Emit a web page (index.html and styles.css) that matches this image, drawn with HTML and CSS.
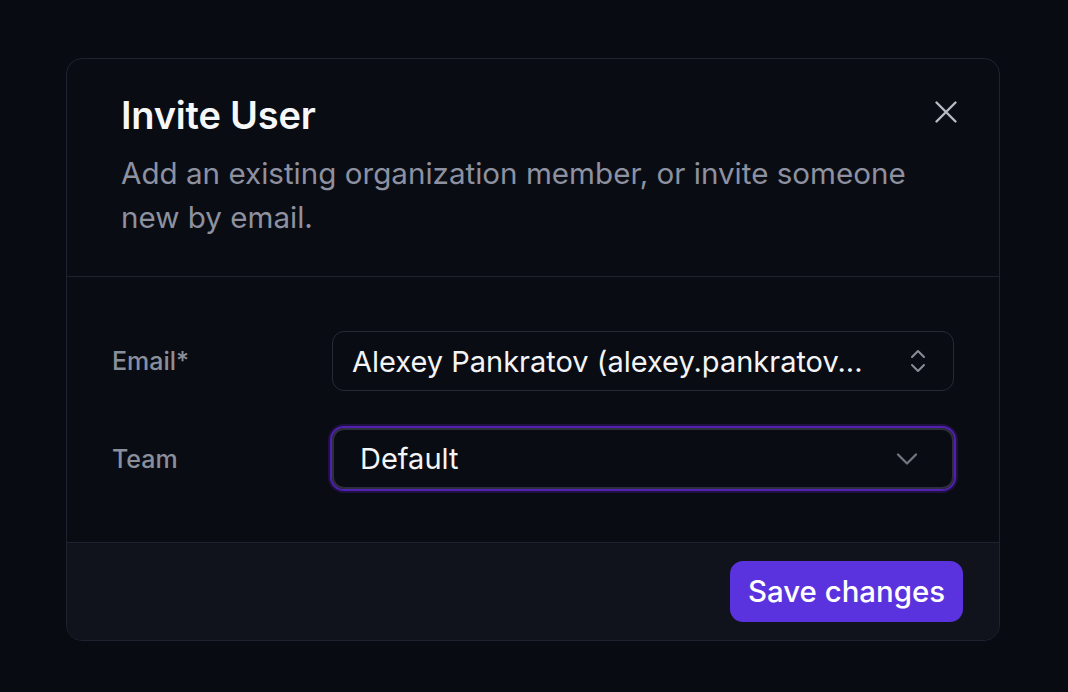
FILE: index.html
```html
<!DOCTYPE html>
<html lang="en">
<head>
<meta charset="utf-8">
<title>Invite User</title>
<link rel="stylesheet" href="styles.css">
</head>
<body>
<div class="modal">
  <div class="modal-header">
    <div class="header-text">
      <h2 class="title">Invite User</h2>
      <p class="desc">Add an existing organization member, or invite someone new by email.</p>
    </div>
    <button class="close" aria-label="Close">
      <svg width="24" height="24" viewBox="0 0 24 24" fill="none" stroke="currentColor" stroke-width="2.4" stroke-linecap="round"><path d="M2.5 2.5L21.5 21.5M21.5 2.5L2.5 21.5"/></svg>
    </button>
  </div>
  <div class="modal-body">
    <div class="row">
      <label class="label">Email*</label>
      <div class="field">
        <span class="value">Alexey Pankratov (alexey.pankratov...</span>
        <svg class="icon-updown" width="20" height="26" viewBox="0 0 20 26" fill="none" stroke="currentColor" stroke-width="2" stroke-linecap="round" stroke-linejoin="round"><path d="M4 9L10 3L16 9M4 17L10 23L16 17"/></svg>
      </div>
    </div>
    <div class="row">
      <label class="label">Team</label>
      <div class="field focused">
        <span class="value">Default</span>
        <svg class="icon-down" width="22" height="14" viewBox="0 0 22 14" fill="none" stroke="currentColor" stroke-width="2.3" stroke-linecap="round" stroke-linejoin="round"><path d="M2 2.5L11 11.5L20 2.5"/></svg>
      </div>
    </div>
  </div>
  <div class="modal-footer">
    <button class="btn-primary">Save changes</button>
  </div>
</div>
</body>
</html>
```

FILE: styles.css
```css
* { box-sizing: border-box; }
html, body { margin: 0; padding: 0; }
body {
  background: #090b12;
  font-family: Inter, "Noto Sans", sans-serif;
  padding: 58px 0 0 66px;
  width: 1068px;
  height: 692px;
}
.modal {
  width: 934px;
  height: 583px;
  border: 1px solid #1f2330;
  border-radius: 16px;
  background: #0a0c14;
  overflow: hidden;
  display: flex;
  flex-direction: column;
}
.modal-header {
  display: flex;
  justify-content: space-between;
  align-items: flex-start;
  padding: 32px 41px 0 54px;
  height: 218px;
  border-bottom: 1px solid #1f2330;
}
.title {
  margin: 0;
  font-size: 38px;
  line-height: 48px;
  font-weight: 600;
  color: #f6f7f9;
  letter-spacing: -0.2px;
}
.desc {
  margin: 13px 0 0;
  font-size: 29.6px;
  line-height: 43.5px;
  color: #8d91a0;
  width: 810px;
}
.close {
  background: none;
  border: 0;
  padding: 0;
  margin-top: 9px;
  color: #b9bbc3;
  cursor: pointer;
  display: flex;
}
.modal-body {
  flex: 1;
  padding: 54px 45px 0 45px;
  display: flex;
  flex-direction: column;
  gap: 37px;
}
.row {
  display: flex;
  align-items: center;
}
.label {
  width: 220px;
  font-size: 25px;
  font-weight: 500;
  color: #8a8f9c;
}
.field {
  flex: 1;
  height: 60px;
  border: 1px solid #272a35;
  border-radius: 12px;
  display: flex;
  align-items: center;
  justify-content: space-between;
  padding: 0 25px 0 19px;
}
.field.focused {
  height: 61px;
  border: 2px solid #2d303c;
  box-shadow: 0 0 0 2px #5020b0, 0 0 0 4px rgba(72, 28, 150, 0.35);
  padding: 0 34px 0 26px;
}
.value {
  font-size: 29px;
  color: #f3f4f6;
  white-space: nowrap;
}
.icon-updown { color: #8a8d97; }
.icon-down { color: #72757f; }
.modal-footer {
  height: 98px;
  background: #10131b;
  border-top: 1px solid #1f2330;
  display: flex;
  justify-content: flex-end;
  align-items: center;
  padding: 0 36px;
}
.btn-primary {
  background: #5b33de;
  color: #ffffff;
  border: 0;
  border-radius: 13px;
  height: 61px;
  padding: 0 18px;
  font-family: Inter, sans-serif;
  font-size: 29.4px;
  font-weight: 500;
  cursor: pointer;
}
```
